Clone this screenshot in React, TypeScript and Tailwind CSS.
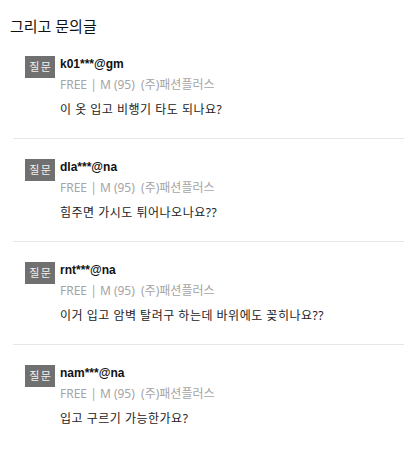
const items = [
  { id: "k01***@gm", text: "이 옷 입고 비행기 타도 되나요?" },
  { id: "dla***@na", text: "힘주면 가시도 튀어나오나요??" },
  { id: "rnt***@na", text: "이거 입고 암벽 탈려구 하는데 바위에도 꽂히나요??" },
  { id: "nam***@na", text: "입고 구르기 가능한가요?" },
];

const font = {
  fontFamily: '"Noto Sans", "Noto Sans CJK KR", sans-serif',
};

const App = () => {
  return (
    <div className="w-[404px] h-[476px] bg-white" style={font}>
      <h2 className="pt-[16px] pl-[10px] text-[15px] leading-[20px] text-[#111111] font-normal">
        그리고 문의글
      </h2>
      <ul className="ml-[13px]">
        {items.map((item, i) => (
          <li
            key={item.id}
            className={`flex pt-[20px] pb-[20px] pl-[12px] ${
              i < items.length - 1 ? "border-b border-[#e6e6e6]" : ""
            }`}
          >
            <span className="w-[30px] h-[22px] flex-shrink-0 flex items-center justify-center bg-[#707070] text-[#f2f2f2] text-[11px] tracking-[1.5px] pl-[1.5px] mr-[5px]">
              질문
            </span>
            <div>
              <p className="text-[12px] leading-[16px] font-bold text-[#111111] font-['Liberation_Sans',sans-serif]">
                {item.id}
              </p>
              <p className="mt-[5px] text-[12px] leading-[16px] text-[#a5a5a5]">
                FREE | M (95)&nbsp;&nbsp;(주)패션플러스
              </p>
              <p className="mt-[9px] text-[12px] leading-[16px] tracking-[0.5px] text-[#222222]">
                {item.text}
              </p>
            </div>
          </li>
        ))}
      </ul>
    </div>
  );
};

export default App;
